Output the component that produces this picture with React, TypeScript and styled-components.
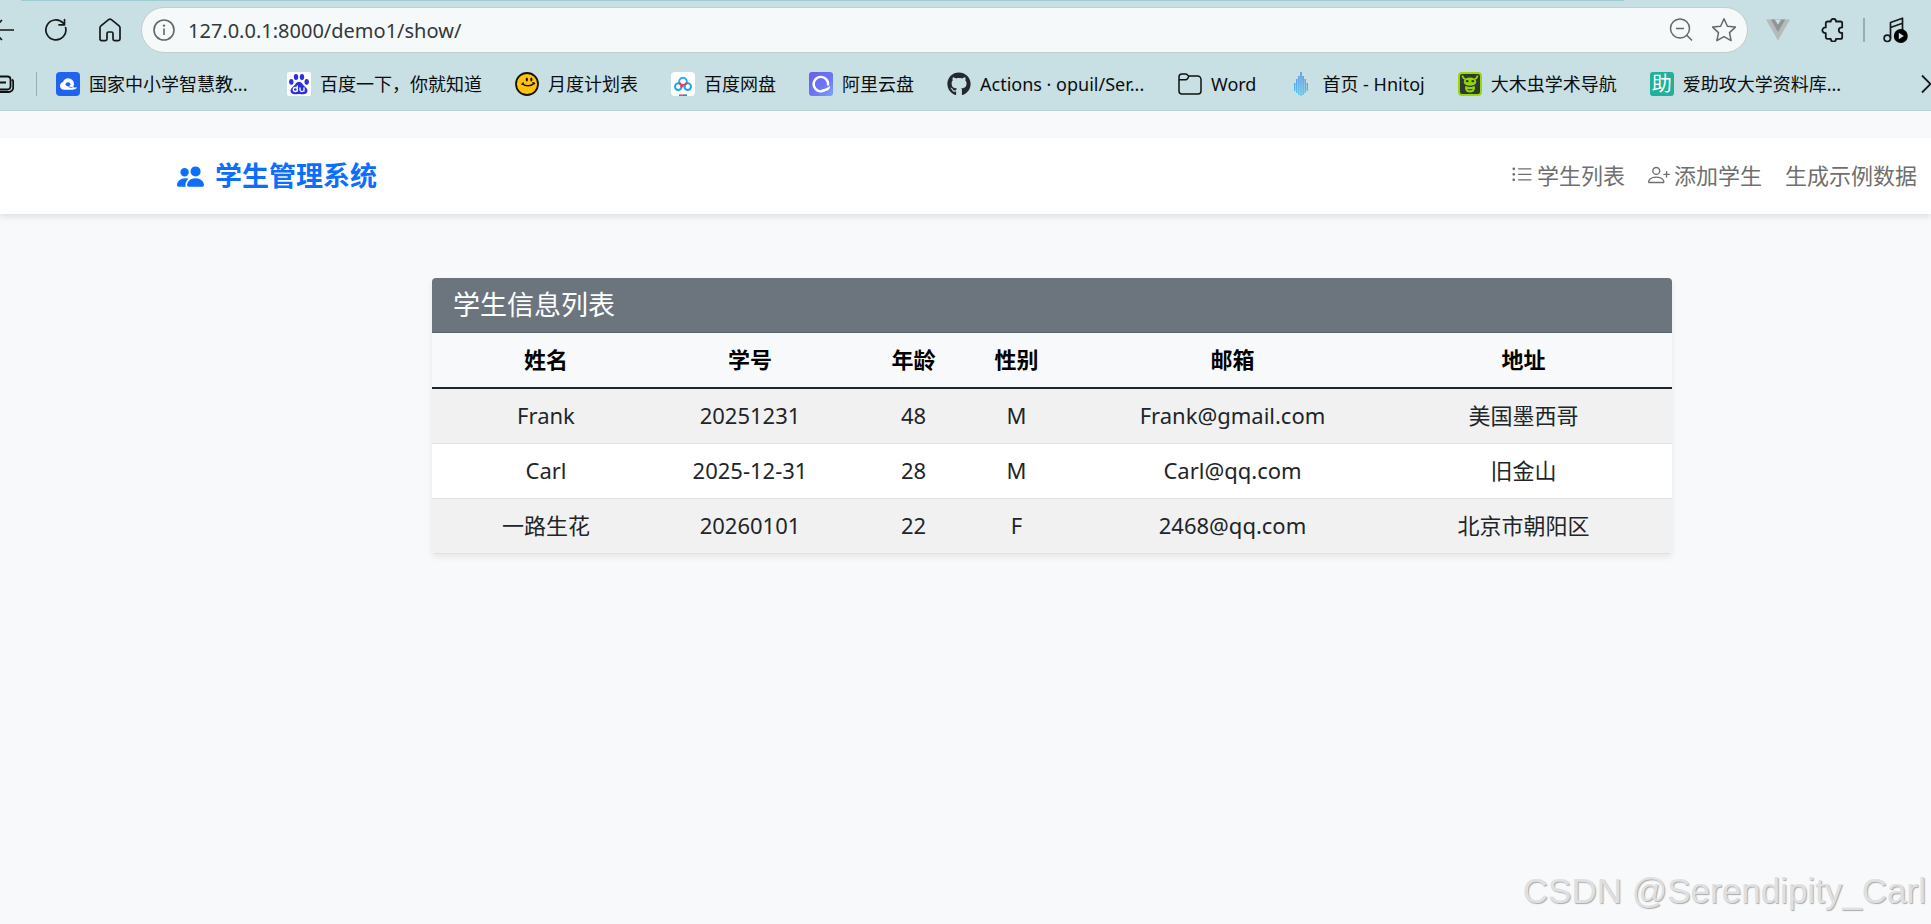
import React from "react";
import styled, { createGlobalStyle } from "styled-components";
import { BsListUl, BsPeopleFill, BsPersonPlus } from "react-icons/bs";
import { FaGithub } from "react-icons/fa";

const GlobalStyle = createGlobalStyle`
  *, *::before, *::after { box-sizing: border-box; }
  body {
    margin: 0;
    background: #f8f9fb;
    color: #212529;
    font-family: "Noto Sans", "Noto Sans CJK SC", sans-serif;
    overflow-x: hidden;
  }
  svg { display: block; flex: none; }
`;

const Screen = styled.div`
  position: relative;
  display: flex;
  flex-direction: column;
  min-height: 100vh;
  overflow: hidden;
`;

/* ---------- browser chrome ---------- */

const Chrome = styled.header`
  background: #c8dfe3;
  border-bottom: 1px solid #b9d2d6;
  padding-bottom: 2px;
`;

const TabEdge = styled.div`
  height: 1px;
  width: 83%;
  margin-left: 21px;
  background: #9fcbd3;
`;

const Toolbar = styled.div`
  display: flex;
  align-items: center;
  padding: 6px 23px 7px 0;
`;

const ToolGroup = styled.div<{ $gap: number }>`
  display: flex;
  align-items: center;
  gap: ${(p) => p.$gap}px;
`;

const IconButton = styled.button`
  display: flex;
  padding: 0;
  border: 0;
  background: none;
  color: #16191a;
`;

const AddressBar = styled.form`
  flex: 1;
  display: flex;
  align-items: center;
  height: 46px;
  margin: 0 18px 0 19px;
  padding: 0 10px 0 11px;
  background: #f5f9fa;
  border: 1px solid #c4cccd;
  border-radius: 23px;
  ${IconButton} { color: #62686a; }
`;

const AddressInput = styled.input`
  flex: 1;
  min-width: 0;
  margin: 0 13px;
  padding: 0;
  border: 0;
  outline: 0;
  background: none;
  color: #33383a;
  font-family: "Noto Sans", sans-serif;
  font-size: 20px;
`;

const Divider = styled.span<{ $thick?: boolean }>`
  flex: none;
  width: ${(p) => (p.$thick ? 2 : 1)}px;
  height: 24px;
  background: #9aacaf;
`;

const BookmarkBar = styled.nav`
  display: flex;
  align-items: center;
  height: 48px;
  ${Divider} { margin: 0 19px 0 22px; }
`;

const BookmarkList = styled.div`
  flex: 1;
  display: flex;
  gap: 33px;
`;

const Bookmark = styled.a<{ $long?: boolean }>`
  display: flex;
  align-items: center;
  gap: 9px;
  flex: none;
  width: ${(p) => (p.$long ? "198px" : "auto")};
  color: #0b0e0f;
  font-size: 18px;
  line-height: 24px;
  white-space: nowrap;
  text-decoration: none;
`;

const Favicon = ({ children }: { children: React.ReactNode }) => (
  <svg width="24" height="24" viewBox="0 0 24 24" fill="none" aria-hidden="true">
    {children}
  </svg>
);

const HelpBadge = styled.span`
  width: 24px;
  height: 24px;
  border-radius: 3px;
  background: #1fb19a;
  color: #fff;
  font-size: 20px;
  line-height: 24px;
  text-align: center;
`;

/* ---------- page ---------- */

const SiteNav = styled.nav`
  display: flex;
  align-items: center;
  justify-content: space-between;
  margin-top: 27px;
  padding: 22px 14px 22px 177px;
  background: #fff;
  box-shadow: 0 3px 6px rgba(0, 0, 0, 0.1);
`;

const Brand = styled.a`
  display: flex;
  align-items: center;
  gap: 11px;
  color: #0d6efd;
  font-size: 27px;
  font-weight: 700;
  line-height: 32px;
  text-decoration: none;
`;

const NavLinks = styled.div`
  display: flex;
  align-items: center;
  gap: 23px;
  padding-bottom: 2px;
`;

const NavLink = styled.a`
  display: flex;
  align-items: center;
  gap: 4px;
  color: #6f6f6f;
  font-size: 22px;
  line-height: 30px;
  text-decoration: none;
`;

const Main = styled.main`
  margin: 64px 259px 0 432px;
`;

const Card = styled.section`
  border-radius: 4px;
  box-shadow: 0 3px 6px rgba(0, 0, 0, 0.08);
  overflow: hidden;
`;

const CardTitle = styled.h5`
  margin: 0;
  padding: 11px 21px;
  background: #6c757d;
  border-bottom: 1px solid #5b646c;
  color: #fff;
  font-size: 27px;
  font-weight: 400;
  line-height: 32px;
`;

const StudentTable = styled.table`
  width: 100%;
  table-layout: fixed;
  border-collapse: separate;
  border-spacing: 0;
  text-align: center;
  font-size: 22px;
  line-height: 32px;
  th:first-child, td:first-child { padding-left: 22px; }
  th:last-child, td:last-child { padding-right: 22px; }
`;

const HeadCell = styled.th`
  padding: 10px 0 12px;
  background: #f8f9fb;
  border-bottom: 2px solid #212529;
  color: #000;
  font-weight: 700;
`;

const Row = styled.tr`
  background: #fff;
  &:nth-child(odd) { background: #f1f1f1; }
`;

const Cell = styled.td`
  padding: 10px 0 12px;
  border-bottom: 1px solid #dee2e6;
`;

const Watermark = styled.div`
  position: absolute;
  right: 5px;
  bottom: 13px;
  color: #dfe0e1;
  font-family: "Liberation Sans", sans-serif;
  font-size: 35px;
  line-height: 40px;
  text-shadow: 1px 1px 1px #a9aaab;
  pointer-events: none;
`;

const columns = [
  { label: "姓名", width: 206 },
  { label: "学号", width: 224 },
  { label: "年龄", width: 103 },
  { label: "性别", width: 103 },
  { label: "邮箱", width: 329 },
  { label: "地址", width: 275 },
];

const students = [
  ["Frank", "20251231", "48", "M", "Frank@gmail.com", "美国墨西哥"],
  ["Carl", "2025-12-31", "28", "M", "Carl@qq.com", "旧金山"],
  ["一路生花", "20260101", "22", "F", "2468@qq.com", "北京市朝阳区"],
];

const bookmarks: { label: string; long?: boolean; icon: React.ReactNode }[] = [
  {
    label: "国家中小学智慧教...",
    long: true,
    icon: (
      <Favicon>
        <rect width="24" height="24" rx="4" fill="#1f63ee" />
        <path d="M12.200 6.200a5.800 5.800 0 0 1 5.800 5.800c0 1.300-.4 2.300-1 3.100 1.300.5 2.700.6 4.200.4-1.200 1.700-3 2.200-5 2.200H8.200C5.800 17.700 4 16 4 13.900c0-2 1.200-3.400 3-3.900.7-2.300 2.700-3.800 5.200-3.800z" fill="#fff" />
        <ellipse cx="12" cy="12.300" rx="2.400" ry="2" fill="#1f63ee" />
        <path d="M12 14.200c1 .9 2.500 1.300 4.500 1.200" stroke="#1f63ee" strokeWidth="0.800" />
      </Favicon>
    ),
  },
  {
    label: "百度一下，你就知道",
    icon: (
      <Favicon>
        <rect width="24" height="24" rx="2" fill="#fff" />
        <g fill="#2a2fe0">
          <ellipse cx="4.300" cy="9.800" rx="2.200" ry="2.900" />
          <ellipse cx="9" cy="4.900" rx="2.200" ry="3" />
          <ellipse cx="15" cy="4.900" rx="2.200" ry="3" />
          <ellipse cx="19.700" cy="9.800" rx="2.200" ry="2.900" />
          <path d="M12 9.800c-2.500 0-3.300 2.300-5 4-1.700 1.600-3.500 2.700-3.500 5 0 2.200 1.700 3.500 4 3.500 1.700 0 3-.4 4.500-.4s2.800.4 4.500.4c2.300 0 4-1.300 4-3.500 0-2.300-1.800-3.400-3.500-5-1.700-1.700-2.500-4-5-4z" />
        </g>
        <path d="M10.300 13.500v6M10.300 17.500a2 2 0 1 1-4 0 2 2 0 0 1 4 0zM13 15.500v2.500c0 2 4 2 4 0v-2.500m0 0v4" stroke="#fff" strokeWidth="1.300" />
      </Favicon>
    ),
  },
  {
    label: "月度计划表",
    icon: (
      <Favicon>
        <circle cx="12" cy="12" r="11" fill="#ffc20e" stroke="#15130c" strokeWidth="1.800" />
        <ellipse cx="11.800" cy="7.500" rx="1.100" ry="1.900" fill="#15130c" />
        <ellipse cx="16.300" cy="7.500" rx="1.100" ry="1.900" fill="#15130c" />
        <path d="M7.500 11.700c2.800 2.800 8.400 2.800 11.300-.3M7 12.300l1.300-1.200M18 10.700l1.500 1" stroke="#15130c" strokeWidth="1.500" strokeLinecap="round" />
      </Favicon>
    ),
  },
  {
    label: "百度网盘",
    icon: (
      <Favicon>
        <rect width="24" height="24" rx="4" fill="#fff" />
        <circle cx="7.300" cy="14.600" r="3.300" stroke="#19a7f5" strokeWidth="2" />
        <circle cx="16.700" cy="14.600" r="3.300" stroke="#19a7f5" strokeWidth="2" />
        <path d="M8.300 11a3.900 3.900 0 1 1 7.400 0" stroke="#22b0f8" strokeWidth="2" />
        <path d="M8.300 10.500c.8 2 2 2.600 3.700 2.600s2.900-.6 3.700-2.600M12 13l-2.300 2.300" stroke="#f0375b" strokeWidth="2" />
        <path d="M12 13l2.300 2.300" stroke="#19a7f5" strokeWidth="2" />
        <path d="M8 23.200h4" stroke="#ef4565" strokeWidth="1.600" />
        <path d="M12 23.200h4" stroke="#2c7bf2" strokeWidth="1.600" />
      </Favicon>
    ),
  },
  {
    label: "阿里云盘",
    icon: (
      <Favicon>
        <defs>
          <linearGradient id="drive" x1="0" y1="0" x2="1" y2="1">
            <stop offset="0" stopColor="#6a5df0" />
            <stop offset="0.600" stopColor="#6b78f5" />
            <stop offset="1" stopColor="#7fa4fb" />
          </linearGradient>
        </defs>
        <rect width="24" height="24" rx="3" fill="url(#drive)" />
        <path d="M15.500 18.300A7.200 7.200 0 1 1 18.900 13.500" stroke="#fff" strokeWidth="2.400" />
        <path d="M12.500 17.200c3.200.2 5.600-.9 8.600-3.400.2 3.200-1.900 5.400-5.500 5.400-1.500 0-3-.6-3.100-2z" fill="#fff" />
      </Favicon>
    ),
  },
  { label: "Actions · opuil/Ser...", long: true, icon: <FaGithub size={24} color="#24292f" /> },
  {
    label: "Word",
    icon: (
      <Favicon>
        <path d="M1 5a3 3 0 0 1 3-3h3.500c1 0 1.500.4 2 1l1 1h9a3.500 3.500 0 0 1 3.500 3.500V19a3 3 0 0 1-3 3H4a3 3 0 0 1-3-3z" stroke="#111" strokeWidth="1.500" />
        <path d="M1 7.800h6.500c1 0 1.500-.4 2-1L11 4" stroke="#111" strokeWidth="1.500" />
      </Favicon>
    ),
  },
  {
    label: "首页 - Hnitoj",
    icon: (
      <Favicon>
        <defs>
          <linearGradient id="drop" gradientUnits="userSpaceOnUse" x1="0" y1="0" x2="0" y2="24">
            <stop offset="0" stopColor="#4a86e8" />
            <stop offset="1" stopColor="#52c8ee" />
          </linearGradient>
        </defs>
        <g fill="url(#drop)">
          <rect x="5" y="11" width="1.400" height="8" />
          <rect x="7.100" y="7" width="1.400" height="14" />
          <rect x="9.200" y="4" width="1.400" height="19" />
          <rect x="11.300" y="0" width="1.400" height="24" />
          <rect x="13.400" y="4" width="1.400" height="19" />
          <rect x="15.500" y="7" width="1.400" height="14" />
          <rect x="17.600" y="11" width="1.400" height="8" />
        </g>
      </Favicon>
    ),
  },
  {
    label: "大木虫学术导航",
    icon: (
      <Favicon>
        <rect x="1" y="1" width="22" height="22" rx="3" fill="#303a2c" stroke="#9bd80b" strokeWidth="2" />
        <path d="M4.500 3.500c0 2 1.200 3.200 3 3.800M19.500 3.500c0 2-1.200 3.200-3 3.800" stroke="#9bd80b" strokeWidth="1.600" />
        <ellipse cx="12" cy="9.800" rx="6.300" ry="4.300" fill="#93d50c" />
        <ellipse cx="12" cy="16" rx="5" ry="4.600" fill="#93d50c" />
        <ellipse cx="9.200" cy="9.200" rx="1.500" ry="1.100" fill="#303a2c" />
        <ellipse cx="14.800" cy="9.200" rx="1.500" ry="1.100" fill="#303a2c" />
        <path d="M7.500 13.300c2.500 1.300 6.500 1.300 9 0M9.700 17.200c1.500.8 3.100.8 4.600 0" stroke="#303a2c" strokeWidth="1.200" />
      </Favicon>
    ),
  },
  { label: "爱助攻大学资料库...", long: true, icon: <HelpBadge aria-hidden="true">助</HelpBadge> },
];

export default function App() {
  return (
    <Screen>
      <GlobalStyle />
      <Chrome>
        <TabEdge />
        <Toolbar>
          <ToolGroup $gap={31}>
            <IconButton aria-label="后退">
              <svg width="14" height="24" viewBox="0 0 14 24" fill="none" stroke="currentColor" strokeWidth="1.600">
                <path d="M-8 12H14M2 2L-8 12L2 22" />
              </svg>
            </IconButton>
            <IconButton aria-label="刷新">
              <svg width="22" height="24" viewBox="0 0 22 24" fill="none" stroke="currentColor" strokeWidth="1.700" strokeLinecap="round" strokeLinejoin="round">
                <path d="M20.600 9.500A10 10 0 1 1 18.300 5.200M19.500 1.500v5.300h-5.500" />
              </svg>
            </IconButton>
            <IconButton aria-label="主页">
              <svg width="24" height="24" viewBox="0 0 24 24" fill="none" stroke="currentColor" strokeWidth="1.700" strokeLinejoin="round">
                <path d="M2 9.800c0-.8.300-1.500.9-2L10.600 1.600c.9-.7 1.900-.7 2.800 0l7.700 6.200c.6.500.9 1.200.9 2V21c0 1-.6 1.600-1.600 1.600h-3.800c-1 0-1.600-.6-1.600-1.600v-5.400c0-1-.5-1.600-1.500-1.600h-3c-1 0-1.500.6-1.500 1.600V21c0 1-.6 1.600-1.600 1.600H3.600C2.600 22.600 2 22 2 21z" />
              </svg>
            </IconButton>
          </ToolGroup>
          <AddressBar onSubmit={(e) => e.preventDefault()}>
            <IconButton type="button" aria-label="网站信息">
              <svg width="22" height="22" viewBox="0 0 22 22" fill="none" stroke="currentColor" strokeWidth="1.600">
                <circle cx="11" cy="11" r="10" />
                <path d="M11 9.500v6.500" />
                <circle cx="11" cy="6.600" r="1.200" fill="currentColor" stroke="none" />
              </svg>
            </IconButton>
            <AddressInput aria-label="地址栏" defaultValue="127.0.0.1:8000/demo1/show/" spellCheck={false} />
            <ToolGroup $gap={18}>
              <IconButton type="button" aria-label="缩小">
                <svg width="24" height="24" viewBox="0 0 24 24" fill="none" stroke="currentColor" strokeWidth="1.500">
                  <circle cx="11" cy="10.500" r="9.500" />
                  <path d="M7 10.500h8M17.800 17.300l5.200 5.200" />
                </svg>
              </IconButton>
              <IconButton type="button" aria-label="收藏">
                <svg width="26" height="26" viewBox="0 0 26 26" fill="none" stroke="currentColor" strokeWidth="1.500" strokeLinejoin="round">
                  <path d="M13 1.800l3.400 7.400 8 .9-5.900 5.500 1.600 8L13 19.700l-7.100 3.900 1.600-8-5.900-5.500 8-.9z" />
                </svg>
              </IconButton>
            </ToolGroup>
          </AddressBar>
          <ToolGroup $gap={18}>
            <ToolGroup $gap={31}>
              <IconButton aria-label="Vue 开发工具">
                <svg width="24" height="24" viewBox="0 0 24 24" aria-hidden="true">
                  <path d="M0 1.500h24L12 22.500z" fill="#b5babb" />
                  <path d="M4.800 1.500h14.400L12 14z" fill="#8f9596" />
                  <path d="M8.800 1.500h6.400L12 6.800z" fill="#c8dfe3" />
                </svg>
              </IconButton>
              <IconButton aria-label="扩展">
                <svg width="24" height="24" viewBox="0 0 24 24" fill="none" stroke="currentColor" strokeWidth="1.800" strokeLinejoin="round">
                  <path d="M6.800 3.500h3c0-3.500 5.200-3.500 5.200 0h4.500c1 0 1.700.7 1.700 1.700v4.200c-4.600 0-4.600 5.500 0 5.500v4.300c0 1-.7 1.700-1.700 1.700H15c0 3.500-5.200 3.500-5.200 0H6.500c-1 0-1.700-.7-1.700-1.700v-4c-4.600 0-4.600-5.800 0-5.800V5.200c0-1 .7-1.700 2-1.700z" />
                </svg>
              </IconButton>
            </ToolGroup>
            <Divider $thick />
            <IconButton aria-label="媒体控制">
              <svg width="25" height="26" viewBox="0 0 25 26" fill="none" stroke="currentColor" strokeWidth="1.700">
                <circle cx="4.300" cy="21.300" r="3.200" />
                <path d="M7.500 21.300V5.500L19.500 1.200V13M7.500 10.500L19.500 6.300" strokeLinejoin="round" />
                <circle cx="17.800" cy="19" r="7" fill="#000" stroke="none" />
                <path d="M15.800 15.700l5 3.300-5 3.300z" fill="#c8dfe3" stroke="none" />
              </svg>
            </IconButton>
          </ToolGroup>
        </Toolbar>
        <BookmarkBar aria-label="收藏夹栏">
          <IconButton aria-label="收藏夹">
            <svg width="14" height="20" viewBox="0 0 14 20" fill="none" stroke="#111" strokeWidth="1.800">
              <path d="M0 2.500h7.500a3 3 0 0 1 3 3v7a3 3 0 0 1-3 3H0M0 8.500h6M12 5.500c1 .8 1.200 1.500 1.200 2.500v5.500a4.500 4.500 0 0 1-4.500 4.500H0" />
            </svg>
          </IconButton>
          <Divider />
          <BookmarkList>
            {bookmarks.map((b) => (
              <Bookmark key={b.label} href="#" $long={b.long}>
                {b.icon}
                <span>{b.label}</span>
              </Bookmark>
            ))}
          </BookmarkList>
          <IconButton aria-label="更多收藏">
            <svg width="10" height="20" viewBox="0 0 10 20" fill="none" stroke="currentColor" strokeWidth="1.800">
              <path d="M1 1.500L9.500 10L1 18.500" />
            </svg>
          </IconButton>
        </BookmarkBar>
      </Chrome>

      <SiteNav>
        <Brand href="#">
          <BsPeopleFill size={27} />
          学生管理系统
        </Brand>
        <NavLinks>
          <NavLink href="#">
            <BsListUl size={22} />
            学生列表
          </NavLink>
          <NavLink href="#">
            <BsPersonPlus size={22} />
            添加学生
          </NavLink>
          <NavLink href="#">生成示例数据</NavLink>
        </NavLinks>
      </SiteNav>

      <Main>
        <Card>
          <CardTitle>学生信息列表</CardTitle>
          <StudentTable>
            <colgroup>
              {columns.map((c) => (
                <col key={c.label} width={c.width} />
              ))}
            </colgroup>
            <thead>
              <tr>
                {columns.map((c) => (
                  <HeadCell key={c.label} scope="col">{c.label}</HeadCell>
                ))}
              </tr>
            </thead>
            <tbody>
              {students.map((s) => (
                <Row key={s[1]}>
                  {s.map((v, i) => (
                    <Cell key={i}>{v}</Cell>
                  ))}
                </Row>
              ))}
            </tbody>
          </StudentTable>
        </Card>
      </Main>

      <Watermark>CSDN @Serendipity_Carl</Watermark>
    </Screen>
  );
}
